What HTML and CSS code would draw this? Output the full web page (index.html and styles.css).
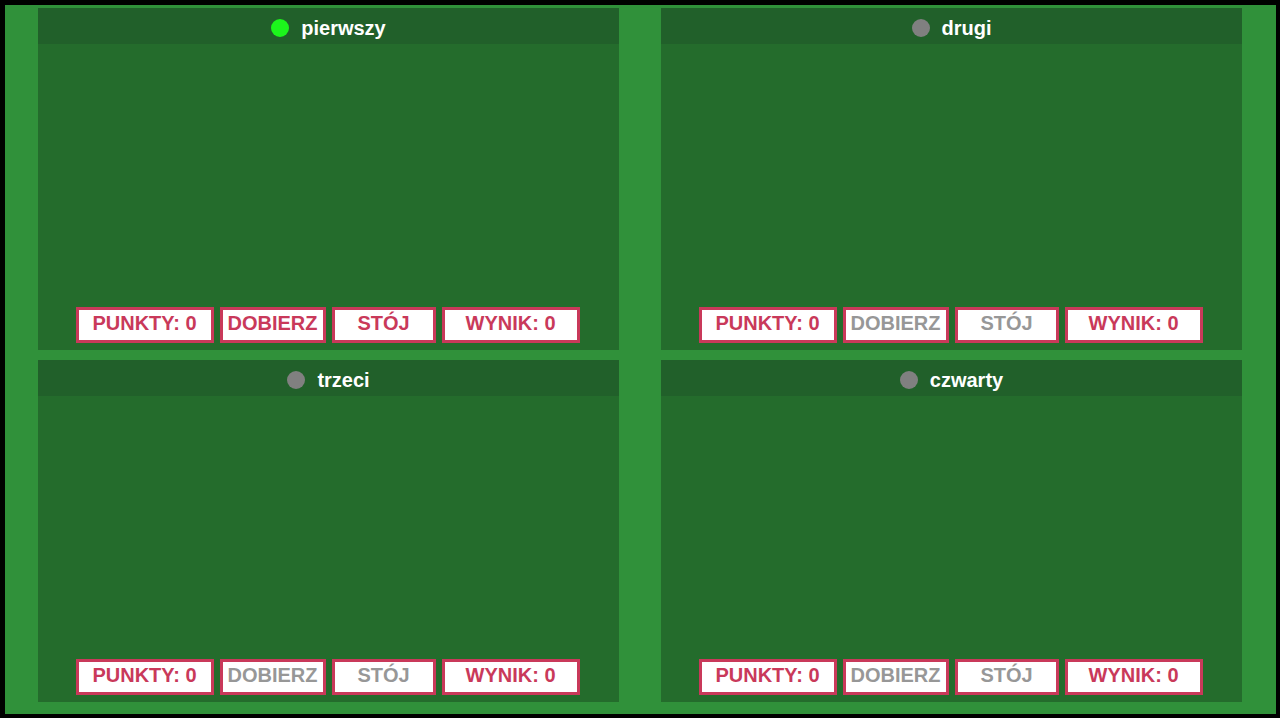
FILE: index.html
```html
<!DOCTYPE html>
<html lang="pl">
<head>
<meta charset="utf-8">
<title>Gra</title>
<link rel="stylesheet" href="styles.css">
</head>
<body>
<div class="frame">
  <section class="panel">
    <header class="head"><span class="dot active"></span><span class="name">pierwszy</span></header>
    <div class="table"></div>
    <div class="controls">
      <span class="box score">PUNKTY: 0</span>
      <span class="box draw">DOBIERZ</span>
      <span class="box stand">STÓJ</span>
      <span class="box score">WYNIK: 0</span>
    </div>
  </section>
  <section class="panel">
    <header class="head"><span class="dot"></span><span class="name">drugi</span></header>
    <div class="table"></div>
    <div class="controls">
      <span class="box score">PUNKTY: 0</span>
      <span class="box draw off">DOBIERZ</span>
      <span class="box stand off">STÓJ</span>
      <span class="box score">WYNIK: 0</span>
    </div>
  </section>
  <section class="panel">
    <header class="head"><span class="dot"></span><span class="name">trzeci</span></header>
    <div class="table"></div>
    <div class="controls">
      <span class="box score">PUNKTY: 0</span>
      <span class="box draw off">DOBIERZ</span>
      <span class="box stand off">STÓJ</span>
      <span class="box score">WYNIK: 0</span>
    </div>
  </section>
  <section class="panel">
    <header class="head"><span class="dot"></span><span class="name">czwarty</span></header>
    <div class="table"></div>
    <div class="controls">
      <span class="box score">PUNKTY: 0</span>
      <span class="box draw off">DOBIERZ</span>
      <span class="box stand off">STÓJ</span>
      <span class="box score">WYNIK: 0</span>
    </div>
  </section>
</div>
</body>
</html>
```
FILE: styles.css
```css
html, body {
  margin: 0;
  padding: 0;
  background: #000;
}
body {
  font-family: "Liberation Sans", Arial, sans-serif;
}
.frame {
  margin: 5px 4px 4px 5px;
  height: 709px;
  box-sizing: border-box;
  background: #30913a;
  padding: 3px 34px 12px 33px;
  display: grid;
  grid-template-columns: 581px 581px;
  grid-template-rows: 342px 342px;
  column-gap: 42px;
  row-gap: 10px;
}
.panel {
  background: #246c2c;
  display: flex;
  flex-direction: column;
}
.head {
  box-sizing: border-box;
  height: 36px;
  padding-top: 4px;
  background: #21602a;
  display: flex;
  align-items: center;
  justify-content: center;
  gap: 12px;
}
.dot {
  width: 18px;
  height: 18px;
  border-radius: 50%;
  background: #808080;
}
.dot.active {
  background: #1cf51c;
}
.name {
  color: #fff;
  font-weight: bold;
  font-size: 20px;
  line-height: 24px;
}
.table {
  flex: 1;
}
.controls {
  display: flex;
  justify-content: center;
  gap: 6px;
  padding: 0 2px 7px 0;
}
.box {
  box-sizing: border-box;
  height: 36px;
  border: 3px solid #c9395a;
  background: #fff;
  color: #c9395a;
  font-weight: bold;
  font-size: 20px;
  line-height: 27px;
  text-align: center;
  white-space: nowrap;
}
.score { width: 138px; }
.draw { width: 106px; }
.stand { width: 104px; }
.off { color: #979797; }
```
